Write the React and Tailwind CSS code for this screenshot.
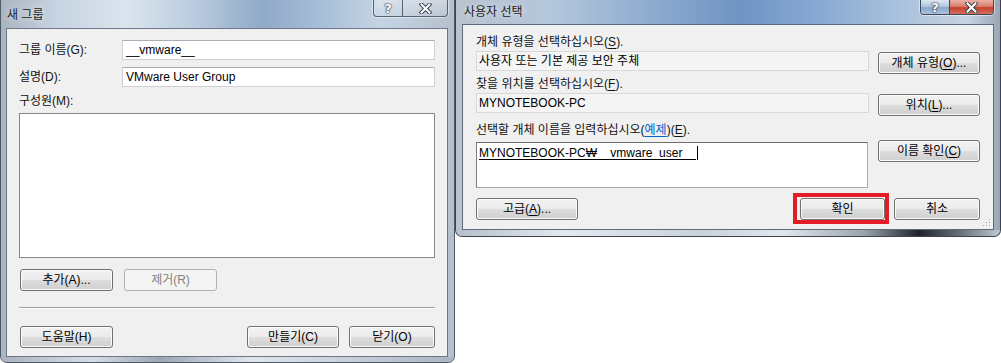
import React from "react";

const font = "font-['Liberation_Sans','Noto_Sans_CJK_KR',sans-serif]";

function Btn({ children, className = "", disabled = false }) {
  const look = disabled
    ? "border-[#adb2b5] bg-[#f4f4f4] text-[#838383]"
    : "border-[#707070] bg-[linear-gradient(to_bottom,#f2f2f2_0%,#ebebeb_48%,#dddddd_52%,#cfcfcf_100%)] text-black shadow-[inset_0_0_0_1px_#fbfbfb]";
  return (
    <div
      className={`h-[22px] flex items-center justify-center rounded-[3px] border text-[12px] leading-[14px] ${look} ${className}`}
    >
      {children}
    </div>
  );
}

function XGlyph() {
  return (
    <svg width="13" height="11" viewBox="0 0 13 11">
      <path d="M2.5 1.5 L10.5 9.5 M10.5 1.5 L2.5 9.5" stroke="#3a4350" strokeWidth="4" strokeLinecap="square" />
      <path d="M2.5 1.5 L10.5 9.5 M10.5 1.5 L2.5 9.5" stroke="#ffffff" strokeWidth="2" strokeLinecap="square" />
    </svg>
  );
}

function Qmark() {
  return (
    <span className="text-[13px] leading-[13px] font-bold text-white font-['DejaVu_Sans',sans-serif] [text-shadow:0_0_1px_#2d3540,0_0_1px_#2d3540,0_0_2px_#2d3540]">
      ?
    </span>
  );
}

function CaptionInactive() {
  return (
    <div className="flex h-[17px] rounded-b-[4px] border-x border-b border-[#56636f] overflow-hidden shadow-[0_0_0_1px_rgba(255,255,255,0.45)]">
      <div className="w-[28px] flex items-center justify-center bg-[linear-gradient(to_bottom,rgba(255,255,255,0.35),rgba(255,255,255,0.08))]">
        <Qmark />
      </div>
      <div className="w-[45px] flex items-center justify-center border-l border-[#56636f] bg-[linear-gradient(to_bottom,rgba(255,255,255,0.35),rgba(255,255,255,0.08))]">
        <XGlyph />
      </div>
    </div>
  );
}

function CaptionActive() {
  return (
    <div className="flex h-[15px] rounded-b-[4px] border-x border-b border-[#3b4a5c] overflow-hidden shadow-[0_0_0_1px_rgba(255,255,255,0.5)]">
      <div className="w-[28px] flex items-center justify-center bg-[linear-gradient(to_bottom,#dce7f3_0%,#b4c8e0_45%,#8aa7ca_55%,#a9c2df_100%)]">
        <Qmark />
      </div>
      <div className="w-[44px] flex items-center justify-center border-l border-[#3b4a5c] bg-[linear-gradient(to_bottom,#eab0a3_0%,#d9806e_45%,#c5412d_55%,#d4705a_100%)]">
        <XGlyph />
      </div>
    </div>
  );
}

function Label({ children, className = "" }) {
  return <div className={`h-[14px] text-[12px] leading-[14px] text-[#111] whitespace-nowrap ${className}`}>{children}</div>;
}

function U({ children }) {
  return <span className="underline underline-offset-[2px]">{children}</span>;
}

function Grip() {
  return (
    <svg width="10" height="10" viewBox="0 0 10 10">
      {[
        [7, 1],
        [4, 4],
        [7, 4],
        [1, 7],
        [4, 7],
        [7, 7],
      ].map(([x, y], i) => (
        <g key={i}>
          <rect x={x + 1} y={y + 1} width="1" height="1" fill="#ffffff" />
          <rect x={x} y={y} width="1" height="1" fill="#a8a8a8" />
        </g>
      ))}
    </svg>
  );
}

function LeftDialog() {
  const input =
    "flex-1 h-[20px] border border-[#cdd1d6] border-t-[#abadb3] bg-white px-[3px] flex items-center text-[12px] leading-[14px] text-black";
  return (
    <div className="w-[455px] h-[363px] shrink-0 flex flex-col rounded-b-[7px] border-x border-b border-[#4e5966] bg-[linear-gradient(90deg,#aab4bf_0%,#c6d3e1_12%,#dae4ee_28%,#bccde0_42%,#8fa9c8_58%,#a6bdd8_70%,#c5d4e4_84%,#b4bfcc_100%)]">
      <div className="h-[28px] flex items-start">
        <div className="pl-[6px] pt-[8px] text-[12px] leading-[14px] text-[#1a1a1a] [text-shadow:0_0_6px_rgba(255,255,255,0.9)]">
          새 그룹
        </div>
        <div className="ml-auto mr-[6px]">
          <CaptionInactive />
        </div>
      </div>
      <div className="ml-[5px] mr-[6px] flex-1 border border-[#6b7785] bg-[#f0f0f0]">
        <div className="flex flex-col pl-[12px] pr-[12px] pt-[11px]">
          <div className="flex items-center h-[20px]">
            <Label className="w-[103px]">그룹 이름(G):</Label>
            <div className={input}>__vmware__</div>
          </div>
          <div className="mt-[7px] flex items-center h-[20px]">
            <Label className="w-[103px]">설명(D):</Label>
            <div className={input}>VMware User Group</div>
          </div>
          <Label className="mt-[7px]">구성원(M):</Label>
          <div className="mt-[5px] h-[145px] border border-[#828790] bg-white" />
          <div className="mt-[11px] flex gap-[11px] pl-[1px]">
            <Btn className="w-[93px]">추가(A)...</Btn>
            <Btn className="w-[93px]" disabled>
              제거(R)
            </Btn>
          </div>
          <div className="mt-[16px] h-[2px] border-t border-[#a0a0a0] border-b border-b-white" />
          <div className="mt-[17px] flex pl-[1px]">
            <Btn className="w-[93px]">도움말(H)</Btn>
            <Btn className="w-[92px] ml-auto">만들기(C)</Btn>
            <Btn className="w-[86px] ml-[10px]">닫기(O)</Btn>
          </div>
        </div>
      </div>
      <div className="h-[5px] rounded-b-[6px] bg-[linear-gradient(90deg,#a9b3be_0%,#d7dde4_20%,#9aa6b4_35%,#e0e6ec_55%,#c3ccd6_80%,#aab5c1_100%)]" />
    </div>
  );
}

function RightDialog() {
  const box =
    "w-[393px] h-[20px] border border-[#d8d8d8] bg-[#f4f4f4] px-[2px] flex items-center text-[12px] leading-[14px] text-black whitespace-nowrap";
  return (
    <div className="w-[546px] h-[237px] shrink-0 flex flex-col rounded-b-[7px] border-x border-b border-[#3a4450] bg-[linear-gradient(90deg,#b9c3ce_0%,#b3c6dc_18%,#8eabcf_36%,#6f94c3_52%,#86a8d2_66%,#a6bfdc_80%,#c7d3e0_94%,#9aa6b3_100%)]">
      <div className="h-[24px] flex items-start">
        <div className="pl-[8px] pt-[5px] text-[12px] leading-[14px] text-[#1a1a1a] [text-shadow:0_0_6px_rgba(255,255,255,0.9)]">
          사용자 선택
        </div>
        <div className="ml-auto mr-[6px]">
          <CaptionActive />
        </div>
      </div>
      <div className="relative ml-[6px] mr-[6px] flex-1 border border-[#5e6b7a] bg-[#f0f0f0]">
        <div className="flex flex-col pl-[13px] pr-[13px] pt-[10px]">
          <Label>
            개체 유형을 선택하십시오(<U>S</U>).
          </Label>
          <div className="mt-[2px] flex items-start">
            <div className={box}>사용자 또는 기본 제공 보안 주체</div>
            <Btn className="w-[102px] ml-auto mt-[1px]">
              개체 유형(<U>O</U>)...
            </Btn>
          </div>
          <Label className="mt-[3px]">
            찾을 위치를 선택하십시오(<U>F</U>).
          </Label>
          <div className="mt-[2px] flex items-start">
            <div className={box}>MYNOTEBOOK-PC</div>
            <Btn className="w-[102px] ml-auto mt-[1px]">
              위치(<U>L</U>)...
            </Btn>
          </div>
          <Label className="mt-[7px]">
            선택할 개체 이름을 입력하십시오(
            <span className="text-[#0066cc] underline underline-offset-[2px]">예제</span>)(<U>E</U>).
          </Label>
          <div className="mt-[3px] flex items-start">
            <div className="mt-[2px] w-[392px] h-[46px] border border-[#a9a9a9] border-t-[#6e6e6e] border-l-[#7e7e7e] bg-white px-[2px] pt-[3px]">
              <div className="flex items-center h-[14px] text-[12px] leading-[14px] text-black whitespace-nowrap">
                <span className="underline underline-offset-[2px]">MYNOTEBOOK-PC₩__vmware_user__</span>
                <span className="ml-[1px] w-[1px] h-[14px] bg-black" />
              </div>
            </div>
            <Btn className="w-[102px] ml-auto">
              이름 확인(<U>C</U>)
            </Btn>
          </div>
          <div className="mt-[10px] flex">
            <Btn className="w-[102px]">
              고급(<U>A</U>)...
            </Btn>
            <div className="relative ml-auto">
              <Btn className="w-[85px]">확인</Btn>
              <div className="absolute -left-[7px] -top-[5px] -right-[4px] -bottom-[4px] border-[4px] border-[#e31c25]" />
            </div>
            <Btn className="w-[86px] ml-[9px]">취소</Btn>
          </div>
        </div>
        <div className="absolute right-[1px] bottom-[1px]">
          <Grip />
        </div>
      </div>
      <div className="h-[6px] rounded-b-[6px] bg-[linear-gradient(90deg,#b5bfca_0%,#e4e9ee_20%,#c9d1da_45%,#e2e7ec_60%,#9aa3ad_75%,#1f2329_85%,#6b737c_93%,#c0c8d0_100%)]" />
    </div>
  );
}

export default function App() {
  return (
    <div className={`w-[1001px] h-[363px] bg-white flex items-start overflow-hidden ${font}`}>
      <LeftDialog />
      <RightDialog />
    </div>
  );
}
